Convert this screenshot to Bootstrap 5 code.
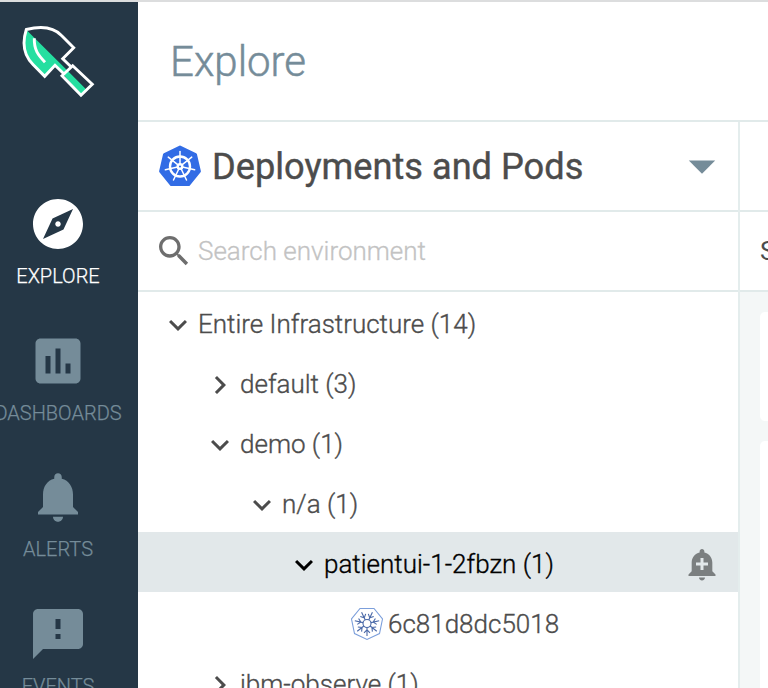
<!DOCTYPE html>
<html lang="en">
<head>
<meta charset="utf-8">
<title>Explore</title>
<link href="https://cdn.jsdelivr.net/npm/bootstrap@5.3.0/dist/css/bootstrap.min.css" rel="stylesheet">
<style>
body{font-family:Roboto,"Liberation Sans",sans-serif;color:#4c4c4c;background:#fff;width:768px;height:688px}
svg{display:block;flex:none}
.app{height:688px;border-top:2px solid #dcddde}
.side{width:138px;background:#253746;padding:22px 22px 0 0}
.brand-mark{height:170px}
.side-item{height:136.7px;color:#758c99;font-size:20px;line-height:24px;font-weight:300;-webkit-text-stroke:.25px}
.side-item span{margin-top:10px}
.side-item.current{color:#fff}
.main-col{min-width:0}
.page-head{height:120px;border-bottom:2px solid #e1eaea;padding:2px 32px 0}
.page-title{font-size:42px;line-height:50px;color:#758c99;font-weight:300;-webkit-text-stroke:.5px}
.left-pane{width:602px;border-right:2px solid #e4eded}
.group-row{height:90px;border-bottom:2px solid #e1eaea;padding:2px 22px 0 21px}
.group-row svg:first-child{margin-top:-2px}
.group-title{font-size:36.2px;line-height:44px;font-weight:400;-webkit-text-stroke:.4px;margin-left:11px}
.search-row{height:80px;border-bottom:2px solid #e1eaea;padding:1px 0 0 16px}
.search-row svg{margin-top:-2px}
.search-text{font-size:26px;font-weight:300;color:#c3c3c3;margin-left:4px;-webkit-text-stroke:.3px}
.tree-row{height:60px;font-size:26px;line-height:32px;font-weight:300;padding-top:4px;-webkit-text-stroke:.35px}
.tree-row svg{margin-right:2px;margin-top:2px}
.lv0{padding-left:22px}.lv1{padding-left:64px}.lv2{padding-left:106px}.lv3{padding-left:148px}.lv4{padding-left:212px}
.tree-row.lv4 svg{margin-top:0}
.tree-row.picked{background:#e2e8ea;color:#000;padding-right:18px}
.tree-row.picked svg:last-child{margin:0;color:#7b7f80}
.right-pane{overflow:hidden}
.right-top{height:90px;border-bottom:2px solid #e1eaea}
.right-label{height:80px;border-bottom:2px solid #e1eaea;padding-left:20px;font-size:26px;font-weight:400}
.panels{background:#f4f7f7;padding:20px 0 0 20px}
.panel{background:#fff;border-radius:5px 0 0 5px;height:109px;margin-bottom:20px}
.panel.tall{height:400px}
</style>
</head>
<body class="overflow-hidden">
<svg width="0" height="0" class="position-absolute">
<symbol id="down" viewBox="0 0 24 24"><path fill="currentColor" d="M16.59 8.59 12 13.17 7.41 8.59 6 10l6 6 6-6z"/></symbol>
<symbol id="right" viewBox="0 0 24 24"><path fill="currentColor" d="M10 6 8.59 7.41 13.17 12l-4.58 4.59L10 18l6-6z"/></symbol>
</svg>
<div class="app d-flex overflow-hidden">
  <nav class="side flex-shrink-0 d-flex flex-column align-items-center overflow-hidden">
    <div class="brand-mark flex-shrink-0">
      <svg width="76" height="76" viewBox="20 24 76 76">
        <path fill="#25dfa0" d="M26.5 30Q19 50 33 65L44.7 77 55 65.3 63 74 81 95.7 87 90z"/>
        <path fill="#253746" d="M74 65 92 84 86.5 89.5 68 70z"/>
        <g fill="none" stroke="#fff" stroke-width="2.9">
          <path d="M63.5 73.5 55 65.3 44.7 76.3 33 64.5Q19.5 51 26.3 29.5C42 25.5 54 27.5 61.5 35.5L73.7 47.7 62.7 58.7 70.5 66.2"/>
          <path d="M72.7 65.7 92.3 84.3 81 95.3 62 75.7z"/>
          <path d="M34.3 38.3C34 50 38 55 45 62.3"/>
        </g>
      </svg>
    </div>
    <div class="side-item current flex-shrink-0 d-flex flex-column align-items-center text-nowrap">
      <svg width="60" height="60" viewBox="0 0 24 24" fill="currentColor"><path d="M12 10.9c-.61 0-1.1.49-1.1 1.1s.49 1.1 1.1 1.1 1.1-.49 1.1-1.1-.49-1.1-1.1-1.1zM12 2C6.48 2 2 6.48 2 12s4.48 10 10 10 10-4.48 10-10S17.52 2 12 2zm2.19 12.19L6 18l3.81-8.19L18 6l-3.81 8.19z"/></svg>
      <span>EXPLORE</span>
    </div>
    <div class="side-item flex-shrink-0 d-flex flex-column align-items-center text-nowrap">
      <svg width="60" height="60" viewBox="0 0 24 24" fill="currentColor"><path d="M19 3H5c-1.1 0-2 .9-2 2v14c0 1.1.9 2 2 2h14c1.1 0 2-.9 2-2V5c0-1.1-.9-2-2-2zM9 17H7v-7h2v7zm4 0h-2V7h2v10zm4 0h-2v-4h2v4z"/></svg>
      <span>DASHBOARDS</span>
    </div>
    <div class="side-item flex-shrink-0 d-flex flex-column align-items-center text-nowrap">
      <svg width="60" height="60" viewBox="0 0 24 24" fill="currentColor"><path d="M10 19.9h4c0 1.1-.9 2-2 2s-2-.9-2-2zM18 16v-5c0-3.07-1.64-5.64-4.5-6.32V4c0-.83-.67-1.5-1.5-1.5s-1.5.67-1.5 1.5v.68C7.63 5.36 6 7.92 6 11v5l-2 2v1h16v-1l-2-2z"/></svg>
      <span>ALERTS</span>
    </div>
    <div class="side-item flex-shrink-0 d-flex flex-column align-items-center text-nowrap">
      <svg width="60" height="60" viewBox="0 0 24 24" fill="currentColor"><path d="M20 2H4c-1.1 0-1.99.9-1.99 2L2 22l4-4h14c1.1 0 2-.9 2-2V4c0-1.1-.9-2-2-2zm-7 12h-2v-2h2v2zm0-4h-2V6h2v4z"/></svg>
      <span>EVENTS</span>
    </div>
  </nav>
  <main class="main-col flex-grow-1 d-flex flex-column">
    <header class="page-head flex-shrink-0 d-flex align-items-center"><h1 class="page-title m-0">Explore</h1></header>
    <div class="d-flex flex-grow-1 overflow-hidden">
      <section class="left-pane flex-shrink-0">
        <div class="group-row d-flex align-items-center">
          <svg width="42" height="42" viewBox="0 0 42 42">
            <path fill="#326ce5" stroke="#326ce5" stroke-width="3" stroke-linejoin="round" d="M21 2 36.5 9.5 40.4 26.3 29.7 39.5H12.3L1.6 26.3 5.5 9.5z"/>
            <g stroke="#fff" fill="none" stroke-width="1.5" stroke-linecap="round">
              <circle cx="21" cy="21.5" r="10" stroke-width="2.4"/>
              <g><path id="sp" d="M21 19V6.5"/><use href="#sp" transform="rotate(51.43 21 21.5)"/><use href="#sp" transform="rotate(102.86 21 21.5)"/><use href="#sp" transform="rotate(154.29 21 21.5)"/><use href="#sp" transform="rotate(205.71 21 21.5)"/><use href="#sp" transform="rotate(257.14 21 21.5)"/><use href="#sp" transform="rotate(308.57 21 21.5)"/></g>
              <circle cx="21" cy="21.5" r="2.3" stroke-width="2.4"/>
            </g>
          </svg>
          <h2 class="group-title mb-0 text-nowrap">Deployments and Pods</h2>
          <svg class="ms-auto" width="28" height="14" viewBox="0 0 28 14"><path fill="#758c99" d="M.8.5h26.4L14 13.7z"/></svg>
        </div>
        <div class="search-row d-flex align-items-center">
          <svg width="40" height="40" viewBox="0 0 24 24" fill="#6e6e6e"><path d="M15.5 14h-.79l-.28-.27C15.41 12.59 16 11.11 16 9.5 16 5.91 13.09 3 9.5 3S3 5.91 3 9.5 5.91 16 9.5 16c1.61 0 3.09-.59 4.23-1.57l.27.28v.79l5 4.99L20.49 19l-4.99-5zm-6 0C7.01 14 5 11.99 5 9.5S7.01 5 9.5 5 14 7.01 14 9.5 11.99 14 9.5 14z"/></svg>
          <span class="search-text">Search environment</span>
        </div>
        <div class="tree-row lv0 d-flex align-items-center"><svg width="36" height="36"><use href="#down"/></svg><span>Entire Infrastructure (14)</span></div>
        <div class="tree-row lv1 d-flex align-items-center"><svg width="36" height="36"><use href="#right"/></svg><span>default (3)</span></div>
        <div class="tree-row lv1 d-flex align-items-center"><svg width="36" height="36"><use href="#down"/></svg><span>demo (1)</span></div>
        <div class="tree-row lv2 d-flex align-items-center"><svg width="36" height="36"><use href="#down"/></svg><span>n/a (1)</span></div>
        <div class="tree-row picked lv3 d-flex align-items-center"><svg width="36" height="36"><use href="#down"/></svg><span>patientui-1-2fbzn (1)</span>
          <svg class="ms-auto" width="36" height="36" viewBox="0 0 24 24" fill="currentColor"><path d="M10.01 21.01c0 1.1.89 1.99 1.99 1.99s1.99-.89 1.99-1.99h-3.98zm8.87-4.19V11c0-3.25-2.25-5.97-5.29-6.69v-.72C13.59 2.71 12.88 2 12 2s-1.59.71-1.59 1.59v.72C7.37 5.03 5.12 7.75 5.12 11v5.82L3 18.94V20h18v-1.06l-2.12-2.12zM16 13.01h-3v3h-2v-3H8V11h3V8h2v3h3v2.01z"/></svg>
        </div>
        <div class="tree-row lv4 d-flex align-items-center">
          <svg class="me-1" width="34" height="34" viewBox="0 0 34 34" fill="none" stroke="#4a69a8" stroke-width="1.1">
            <path stroke="#7c9fdb" d="M10 1.5H24L32.5 12 29.5 26.5 17 32.5 4.5 26.5 1.5 12z"/>
            <circle cx="17" cy="16.5" r="4"/>
            <path id="fl" d="M17 20.5V29M14 25.8 17 22.8 20 25.8"/>
            <use href="#fl" transform="rotate(51.43 17 16.5)"/><use href="#fl" transform="rotate(102.86 17 16.5)"/><use href="#fl" transform="rotate(154.29 17 16.5)"/><use href="#fl" transform="rotate(205.71 17 16.5)"/><use href="#fl" transform="rotate(257.14 17 16.5)"/><use href="#fl" transform="rotate(308.57 17 16.5)"/>
          </svg>
          <span>6c81d8dc5018</span>
        </div>
        <div class="tree-row lv1 d-flex align-items-center"><svg width="36" height="36"><use href="#right"/></svg><span>ibm-observe (1)</span></div>
      </section>
      <section class="right-pane flex-grow-1 d-flex flex-column">
        <div class="right-top flex-shrink-0"></div>
        <div class="right-label flex-shrink-0 d-flex align-items-center">S</div>
        <div class="panels flex-grow-1"><div class="panel"></div><div class="panel tall"></div></div>
      </section>
    </div>
  </main>
</div>
<script src="https://cdn.jsdelivr.net/npm/bootstrap@5.3.0/dist/js/bootstrap.bundle.min.js"></script>
</body>
</html>
